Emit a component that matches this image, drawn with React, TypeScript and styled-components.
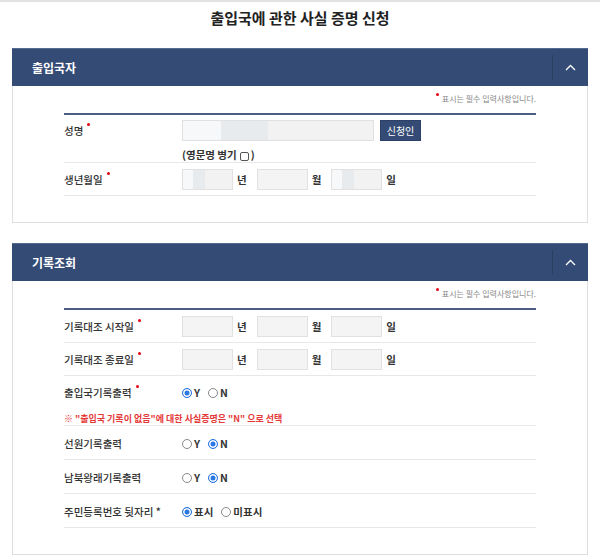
import React from "react";
import styled, { createGlobalStyle } from "styled-components";

const GlobalStyle = createGlobalStyle`
  html, body {
    margin: 0;
    padding: 0;
    background: #fff;
  }
  body {
    font-family: "Noto Sans CJK KR", "Noto Sans", sans-serif;
    color: #333;
  }
  * {
    box-sizing: border-box;
  }
`;

const Page = styled.div`
  border-top: 2px solid #e2e2e2;
  padding: 0 12px 8px;
`;

const Title = styled.h1`
  margin: 0 0 14px;
  line-height: 32px;
  font-size: 15px;
  font-weight: 700;
  color: #222;
  text-align: center;
`;

const Panel = styled.section`
  margin-bottom: 20px;
`;

const PanelHeader = styled.div`
  display: flex;
  align-items: center;
  justify-content: space-between;
  height: 38px;
  padding-left: 20px;
  background: #344b76;
  border-top: 1px solid #56698f;
`;

const PanelTitle = styled.h2`
  margin: 0;
  font-size: 12px;
  font-weight: 700;
  color: #fff;
`;

const Toggle = styled.button`
  display: flex;
  align-items: center;
  justify-content: center;
  width: 36px;
  height: 25px;
  padding: 0;
  border: none;
  border-left: 1px solid #2b3f63;
  background: transparent;
  cursor: pointer;
`;

const PanelBody = styled.div`
  padding: 6px 51px 26px;
  border: 1px solid #dedede;
  border-top: none;
`;

const RequiredNote = styled.p`
  margin: 0 0 7px;
  line-height: 14px;
  font-size: 8px;
  color: #888;
  text-align: right;
`;

const Dot = styled.span`
  display: inline-block;
  position: relative;
  top: -0.7em;
  width: 3px;
  height: 3px;
  margin: 0 3px 0 4px;
  border-radius: 50%;
  background: #e60012;
  vertical-align: middle;
`;

const Form = styled.div`
  border-top: 2px solid #4b5d82;
`;

const Row = styled.div<{ $tall?: boolean }>`
  display: flex;
  align-items: ${(p) => (p.$tall ? "flex-start" : "center")};
  padding: ${(p) => (p.$tall ? "5px 0 0" : "6px 0 5px")};
  border-bottom: 1px solid #e8e8e8;
`;

const Group = styled.div`
  border-bottom: 1px solid #e8e8e8;
`;

const InnerRow = styled.div`
  display: flex;
  align-items: center;
  padding: 5px 0 10px;
`;

const Label = styled.div`
  width: 118px;
  flex-shrink: 0;
  line-height: 21px;
  font-size: 10.5px;
  font-weight: 500;
  color: #333;
`;

const Field = styled.div`
  display: flex;
  flex-direction: column;
  gap: 7px;
`;

const Line = styled.div`
  display: flex;
  align-items: center;
  min-height: 21px;
`;

const TextInput = styled.input<{ $w: number; $masked?: boolean }>`
  width: ${(p) => p.$w}px;
  height: 21px;
  padding: 0 4px;
  border: 1px solid #e1e1e1;
  background: ${(p) =>
    p.$masked
      ? "linear-gradient(90deg, #f7f8f9 0 20%, #e7ebee 20% 45%, #f2f2f2 45%)"
      : "#f4f4f4"};
  font: inherit;
  font-size: 10.5px;
  outline: none;
`;

const ApplicantButton = styled.button`
  height: 21px;
  width: 41px;
  margin-left: 6px;
  padding: 0;
  border: 1px solid #2c4068;
  background: #344b76;
  color: #fff;
  font-family: inherit;
  font-size: 10px;
  cursor: pointer;
`;

const SubNote = styled.div`
  display: flex;
  align-items: center;
  line-height: 14px;
  font-size: 10.5px;
  font-weight: 700;
  color: #333;
`;

const Check = styled.input`
  appearance: none;
  width: 9px;
  height: 9px;
  margin: 3px 2px 0 3px;
  border: 1px solid #555;
  border-radius: 2px;
  background: #fff;
`;

const Unit = styled.span`
  margin: 0 10px 0 4px;
  font-size: 10.5px;
  font-weight: 700;
  color: #333;
`;

const RadioSet = styled.div`
  display: flex;
  align-items: center;
  gap: 8px;
  min-height: 22px;
`;

const RadioLabel = styled.label`
  display: flex;
  align-items: center;
  gap: 2px;
  font-size: 10.5px;
  font-weight: 700;
  color: #333;
  cursor: pointer;
`;

const Radio = styled.input`
  appearance: none;
  width: 10px;
  height: 10px;
  margin: 2px 0 0;
  border: 1px solid #8a8a8a;
  border-radius: 50%;
  background: #fff;

  &:checked {
    border-color: #2a78e4;
    background: #2a78e4;
    box-shadow: inset 0 0 0 1.5px #fff;
  }
`;

const Notice = styled.p`
  margin: 0;
  line-height: 12px;
  font-size: 9px;
  font-weight: 700;
  color: #e53a3a;
`;

const Chevron = () => (
  <svg width="11" height="7" viewBox="0 0 11 7">
    <polyline points="1,6 5.5,1.5 10,6" fill="none" stroke="#fff" strokeWidth="1.3" />
  </svg>
);

const DateInputs = ({ name, masked }: { name: string; masked?: boolean }) => (
  <Line>
    <TextInput $w={51} $masked={masked} name={`${name}-y`} />
    <Unit>년</Unit>
    <TextInput $w={51} name={`${name}-m`} />
    <Unit>월</Unit>
    <TextInput $w={51} $masked={masked} name={`${name}-d`} />
    <Unit>일</Unit>
  </Line>
);

const YesNo = ({ name, value }: { name: string; value: "Y" | "N" }) => (
  <RadioSet>
    <RadioLabel>
      <Radio type="radio" name={name} defaultChecked={value === "Y"} />Y
    </RadioLabel>
    <RadioLabel>
      <Radio type="radio" name={name} defaultChecked={value === "N"} />N
    </RadioLabel>
  </RadioSet>
);

const Section = ({ title, children }: { title: string; children: React.ReactNode }) => (
  <Panel>
    <PanelHeader>
      <PanelTitle>{title}</PanelTitle>
      <Toggle aria-label="접기">
        <Chevron />
      </Toggle>
    </PanelHeader>
    <PanelBody>
      <RequiredNote>
        <Dot />표시는 필수 입력사항입니다.
      </RequiredNote>
      <Form>{children}</Form>
    </PanelBody>
  </Panel>
);

const App = () => {
  return (
    <Page>
      <GlobalStyle />
      <Title>출입국에 관한 사실 증명 신청</Title>

      <Section title="출입국자">
        <Row $tall>
          <Label>
            성명<Dot />
          </Label>
          <Field>
            <Line>
              <TextInput $w={192} $masked name="name" />
              <ApplicantButton>신청인</ApplicantButton>
            </Line>
            <SubNote>
              (영문명 병기<Check type="checkbox" />)
            </SubNote>
          </Field>
        </Row>
        <Row>
          <Label>
            생년월일<Dot />
          </Label>
          <DateInputs name="birth" masked />
        </Row>
      </Section>

      <Section title="기록조회">
        <Row>
          <Label>
            기록대조 시작일<Dot />
          </Label>
          <DateInputs name="start" />
        </Row>
        <Row>
          <Label>
            기록대조 종료일<Dot />
          </Label>
          <DateInputs name="end" />
        </Row>
        <Group>
          <InnerRow>
            <Label>
              출입국기록출력<Dot />
            </Label>
            <YesNo name="immigration" value="Y" />
          </InnerRow>
          <Notice>※ "출입국 기록이 없음"에 대한 사실증명은 "N" 으로 선택</Notice>
        </Group>
        <Row>
          <Label>선원기록출력</Label>
          <YesNo name="seaman" value="N" />
        </Row>
        <Row>
          <Label>남북왕래기록출력</Label>
          <YesNo name="interkorea" value="N" />
        </Row>
        <Row>
          <Label>주민등록번호 뒷자리 *</Label>
          <RadioSet>
            <RadioLabel>
              <Radio type="radio" name="rrn" defaultChecked />표시
            </RadioLabel>
            <RadioLabel>
              <Radio type="radio" name="rrn" />미표시
            </RadioLabel>
          </RadioSet>
        </Row>
      </Section>
    </Page>
  );
};

export default App;
